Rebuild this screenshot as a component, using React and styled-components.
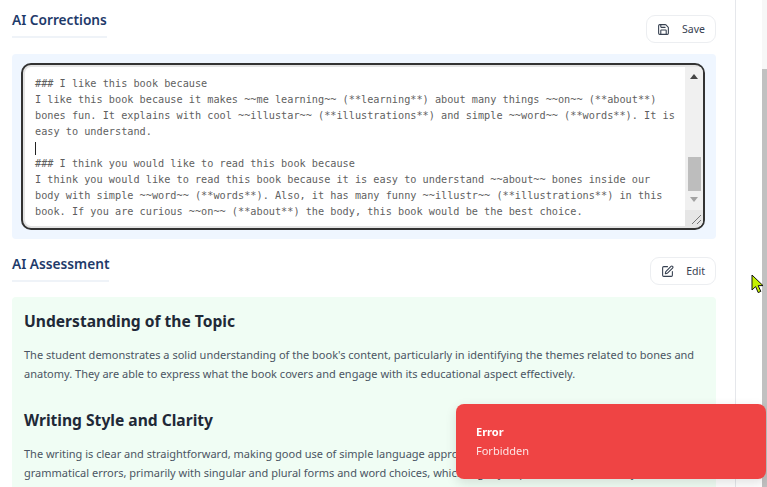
import React from "react";
import styled, { createGlobalStyle } from "styled-components";
import { Save, SquarePen } from "lucide-react";

const GlobalStyle = createGlobalStyle`
  html, body {
    margin: 0;
    padding: 0;
    height: 100%;
    overflow: hidden;
    background: #fff;
    font-family: "Noto Sans", sans-serif;
  }
`;

const Page = styled.div`
  display: flex;
  height: 100vh;
  overflow: hidden;
`;

const Main = styled.main`
  width: 736px;
  flex-shrink: 0;
  box-sizing: border-box;
  padding: 0 19px 0 12px;
  border-right: 1px solid #e5e7eb;
  overflow: hidden;
`;

const Side = styled.aside`
  flex: 1;
  display: flex;
  justify-content: flex-end;
`;

const PageScroll = styled.div`
  width: 5px;
  background: #f7f7f7;
  padding-top: 69px;
  display: flex;
`;

const PageThumb = styled.div`
  flex: 1;
  background: #c1c1c1;
`;

const Header = styled.div`
  display: flex;
  justify-content: space-between;
  align-items: flex-start;
  padding-top: ${({ $top }) => $top}px;
  margin-bottom: ${({ $gap }) => $gap}px;
`;

const Title = styled.h2`
  margin: 0;
  padding-bottom: 6px;
  font-size: 13.7px;
  line-height: 20px;
  font-weight: 600;
  color: #1e3a6a;
  border-bottom: 2px solid #eff3f8;
`;

const Button = styled.button`
  display: flex;
  align-items: center;
  gap: 12px;
  height: ${({ $height }) => $height}px;
  margin-top: ${({ $offset }) => $offset}px;
  padding: 0 10px;
  background: #fff;
  border: 1px solid #eceef1;
  border-radius: 9px;
  color: #374151;
  font-family: inherit;
  font-size: 10.5px;
`;

const CorrectionsPanel = styled.section`
  height: 185px;
  box-sizing: border-box;
  padding: 9px 11px 9px 9px;
  background: #eff6ff;
  border-radius: 4px;
`;

const Editor = styled.div`
  height: 167px;
  box-sizing: border-box;
  display: flex;
  border: 2px solid #333;
  border-radius: 10px;
  box-shadow: inset 0 0 0 2px #e4e4e4;
  background: #fff;
  overflow: hidden;
  padding: 2px 0 2px 2px;
`;

const EditorText = styled.div`
  flex: 1;
  padding: 9px 0 0 10px;
  font-family: "DejaVu Sans Mono", monospace;
  font-size: 10.23px;
  line-height: 16px;
  color: #5f5f5f;
  white-space: pre;
  overflow: hidden;
`;

const Caret = styled.span`
  display: block;
  width: 1px;
  height: 13px;
  margin-top: 2px;
  margin-bottom: 1px;
  background: #222;
`;

const ScrollBar = styled.div`
  width: 18px;
  display: flex;
  flex-direction: column;
  align-items: center;
  background: #f0f0f0;
`;

const Arrow = styled.div`
  width: 0;
  height: 0;
  margin-top: ${({ $mt }) => $mt}px;
  border-left: 4px solid transparent;
  border-right: 4px solid transparent;
  border-bottom: ${({ $down }) => ($down ? "0" : "5px solid #444")};
  border-top: ${({ $down }) => ($down ? "5px solid #a3a3a3" : "0")};
`;

const Thumb = styled.div`
  width: 13px;
  height: 34px;
  margin-top: 78px;
  background: #bdbdbd;
`;

const Resizer = styled.div`
  align-self: stretch;
  height: 16px;
  margin-top: auto;
  display: flex;
  background: #e6e6e6;
`;

const AssessPanel = styled.section`
  height: 200px;
  box-sizing: border-box;
  padding: 12px 12px 0;
  background: #f0fdf4;
  border-radius: 4px 4px 0 0;
`;

const Heading = styled.h3`
  margin: ${({ $mt }) => $mt}px 0 0;
  font-size: 15.6px;
  line-height: 24px;
  font-weight: 700;
  color: #1f2937;
`;

const Para = styled.p`
  margin: 12px 0 0;
  font-size: 11px;
  line-height: 19px;
  color: #4b5563;
`;

const Toast = styled.div`
  position: fixed;
  left: 456px;
  top: 404px;
  width: 310px;
  height: 75px;
  box-sizing: border-box;
  padding: 18px 20px;
  background: #ef4444;
  border-radius: 8px;
  box-shadow: 0 4px 12px rgba(0, 0, 0, 0.12);
  color: #fff;
`;

const ToastTitle = styled.div`
  font-size: 11px;
  line-height: 19px;
  font-weight: 700;
`;

const ToastBody = styled.div`
  font-size: 11px;
  line-height: 19px;
  opacity: 0.85;
`;

const Pointer = styled.svg`
  position: fixed;
  left: 751px;
  top: 274px;
`;

const before = [
  "### I like this book because",
  "I like this book because it makes ~~me learning~~ (**learning**) about many things ~~on~~ (**about**)",
  "bones fun. It explains with cool ~~illustar~~ (**illustrations**) and simple ~~word~~ (**words**). It is",
  "easy to understand.",
];

const after = [
  "### I think you would like to read this book because",
  "I think you would like to read this book because it is easy to understand ~~about~~ bones inside our",
  "body with simple ~~word~~ (**words**). Also, it has many funny ~~illustr~~ (**illustrations**) in this",
  "book. If you are curious ~~on~~ (**about**) the body, this book would be the best choice.",
];

export default function App() {
  return (
    <Page>
      <GlobalStyle />
      <Main>
        <Header $top={10} $gap={11}>
          <Title>AI Corrections</Title>
          <Button $height={28} $offset={5}>
            <Save size={13} strokeWidth={2} />
            Save
          </Button>
        </Header>
        <CorrectionsPanel>
          <Editor>
            <EditorText>
              {before.join("\n")}
              <Caret />
              {after.join("\n")}
            </EditorText>
            <ScrollBar>
              <Arrow $mt={7} />
              <Thumb />
              <Arrow $down $mt={6} />
              <Resizer>
                <svg width="18" height="16" viewBox="0 0 18 16">
                  <path d="M7 14 16 5M12 14l4-4" stroke="#777" strokeWidth="1" fill="none" />
                </svg>
              </Resizer>
            </ScrollBar>
          </Editor>
        </CorrectionsPanel>
        <Header $top={15} $gap={12}>
          <Title>AI Assessment</Title>
          <Button $height={28} $offset={3}>
            <SquarePen size={13} strokeWidth={2} />
            Edit
          </Button>
        </Header>
        <AssessPanel>
          <Heading $mt={0}>Understanding of the Topic</Heading>
          <Para>
            The student demonstrates a solid understanding of the book's content, particularly in identifying the themes related to bones and anatomy. They are able to express what the book covers and engage with its educational aspect effectively.
          </Para>
          <Heading $mt={25}>Writing Style and Clarity</Heading>
          <Para>
            The writing is clear and straightforward, making good use of simple language appropriately for the audience. There are some grammatical errors, primarily with singular and plural forms and word choices, which slightly impede the overall clarity at times,
          </Para>
        </AssessPanel>
      </Main>
      <Side>
        <PageScroll>
          <PageThumb />
        </PageScroll>
      </Side>
      <Pointer width="13" height="20" viewBox="0 0 13 20">
        <path d="M1 1v15l3.6-3.4 2.6 6 2.6-1.2-2.6-5.8H12z" fill="#c4f000" stroke="#111" strokeWidth="1" />
      </Pointer>
      <Toast>
        <ToastTitle>Error</ToastTitle>
        <ToastBody>Forbidden</ToastBody>
      </Toast>
    </Page>
  );
}
